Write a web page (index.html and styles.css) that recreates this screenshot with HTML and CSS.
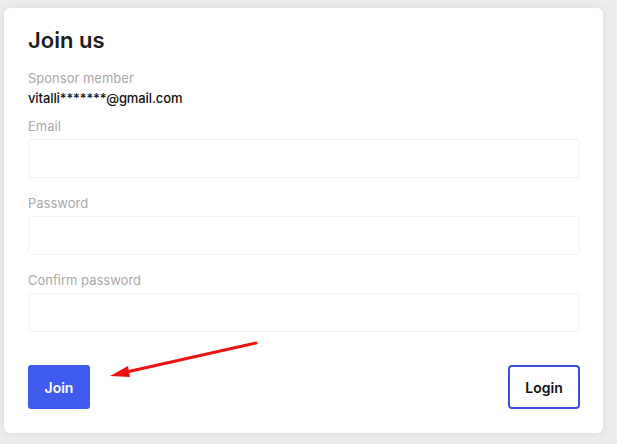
FILE: index.html
```html
<!DOCTYPE html>
<html lang="en">
<head>
    <meta charset="UTF-8">
    <meta name="viewport" content="width=device-width, initial-scale=1.0">
    <title>Join us</title>
    <link rel="stylesheet" href="styles.css">
</head>
<body>
<div class="card">
    <h2>Join us</h2>
    <form name="join">
        <div class="sponsor">
            <span class="label">Sponsor member</span>
            <span class="sponsor-email">vitalli*******@gmail.com</span>
        </div>

        <label for="email">Email</label>
        <input type="email" id="email" name="email">

        <label for="password">Password</label>
        <input type="password" id="password" name="password">

        <label for="confirm">Confirm password</label>
        <input type="password" id="confirm" name="confirm">

        <div class="actions">
            <button type="submit" class="btn-join">Join</button>
            <button type="button" class="btn-login">Login</button>
        </div>
    </form>

    <!-- annotation arrow -->
    <svg class="arrow" width="160" height="50" viewBox="0 0 160 50">
        <line x1="148" y1="4" x2="14" y2="34" stroke="#ee1111" stroke-width="3" stroke-linecap="round"/>
        <polygon points="2,37 20,27 22,38" fill="#ee1111"/>
    </svg>
</div>
</body>
</html>
```

FILE: styles.css
```css
body {
    font-family: Inter, "Noto Sans", sans-serif;
    margin: 0;
    padding: 8px 14px 11px 4px;
    background-color: #ececec;
}

.card {
    position: relative;
    background-color: #fff;
    border-radius: 6px;
    box-shadow: 0 0 10px rgba(0, 0, 0, 0.08);
    padding: 18px 23px 24px 24px;
    height: 425px;
    box-sizing: border-box;
}

h2 {
    margin: 0;
    font-size: 22px;
    font-weight: 600;
    color: #1d1d1f;
    line-height: 28px;
}

.sponsor {
    display: flex;
    flex-direction: column;
    margin-top: 15px;
}

.label,
label {
    display: block;
    font-size: 13px;
    color: #a9a9a9;
    line-height: 18px;
}

.sponsor-email {
    font-size: 13px;
    font-weight: 500;
    color: #111;
    line-height: 22px;
    letter-spacing: -0.1px;
}

label {
    margin-top: 8px;
}

input[type="email"],
input[type="password"] {
    display: block;
    width: 100%;
    height: 39px;
    margin-top: 4px;
    margin-bottom: 16px;
    border: 1px solid #f2f2f2;
    border-radius: 3px;
    box-sizing: border-box;
}

.actions {
    display: flex;
    justify-content: space-between;
    margin-top: 33px;
}

.btn-join {
    background-color: #3f5bf0;
    color: #fff;
    font-family: inherit;
    font-size: 14px;
    font-weight: 600;
    width: 62px;
    height: 44px;
    border: none;
    border-radius: 3px;
}

.btn-login {
    background-color: #fff;
    color: #111;
    font-family: inherit;
    font-size: 14px;
    font-weight: 600;
    width: 72px;
    height: 44px;
    border: 2px solid #3a4fd6;
    border-radius: 4px;
}

.arrow {
    position: absolute;
    left: 104px;
    top: 331px;
}
```
